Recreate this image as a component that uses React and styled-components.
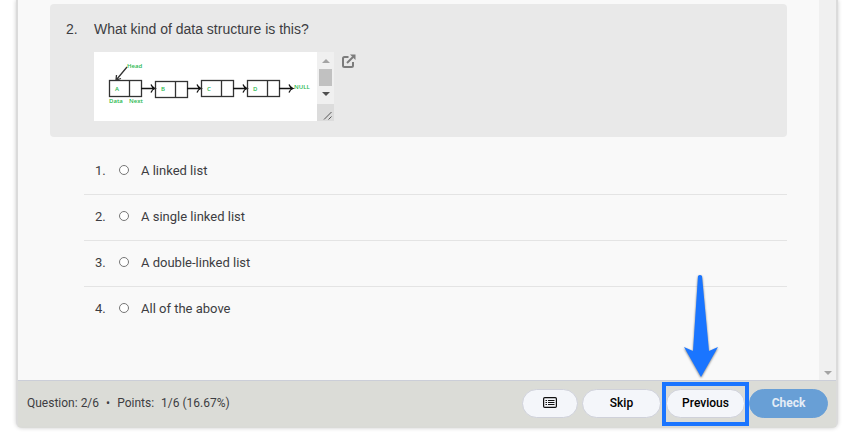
import React, { useState } from "react";
import styled, { createGlobalStyle } from "styled-components";

const GlobalStyle = createGlobalStyle`
* {
    box-sizing: border-box;
}
body {
    margin: 0;
    background: #ffffff;
    color: #3d3d42;
    font-family: Roboto, "Liberation Sans", sans-serif;
    font-size: 13px;
}
`
const Page = styled.div`
padding: 0 26px 4px 16px;
`
const Panel = styled.main`
display: flex;
flex-direction: column;
border: 2px solid #dbdbdb;
border-top: 0;
border-bottom-color: #dadbd7;
border-radius: 0 0 6px 6px;
background: #f9f9f9;
box-shadow: 0 0 4px rgba(0, 0, 0, 0.2);
`
const Body = styled.div`
display: flex;
`
const Content = styled.div`
flex: 1;
padding: 4px 32px 48px;
`
const Gutter = styled.div`
display: flex;
align-items: flex-end;
justify-content: center;
width: 17px;
padding-bottom: 5px;
background: #f0f0f0;
`
const QuestionCard = styled.section`
display: flex;
padding: 16px;
border-radius: 4px;
background: #e9e9e9;
font-family: "Liberation Sans", Arial, sans-serif;
font-size: 14px;
line-height: 18px;
`
const QuestionNumber = styled.div`
width: 28px;
`
const QuestionTitle = styled.h1`
margin: 0 0 14px;
font-size: inherit;
font-weight: 400;
`
const Media = styled.div`
display: flex;
gap: 8px;
`
const ImageFrame = styled.div`
display: flex;
height: 69px;
background: #ffffff;
`
const ScrollColumn = styled.div`
display: flex;
flex-direction: column;
width: 17px;
background: #f0f0f0;
`
const ScrollTrack = styled.div`
display: flex;
flex: 1;
flex-direction: column;
align-items: center;
padding-top: 7px;
gap: 6px;
`
const Thumb = styled.div`
width: 13px;
height: 17px;
background: #c1c1c1;
`
const Caret = styled.span`
width: 0;
height: 0;
border: 4px solid transparent;
border-top-width: ${props => props.$up ? "0" : "4px"};
border-bottom-width: ${props => props.$up ? "4px" : "0"};
border-top-color: ${props => props.$up ? "transparent" : props.$color};
border-bottom-color: ${props => props.$up ? props.$color : "transparent"};
`
const Grip = styled.div`
display: flex;
align-items: flex-end;
justify-content: flex-end;
height: 17px;
background: #dcdcdc;
`
const OpenButton = styled.button`
align-self: flex-start;
padding: 2px 0 0;
border: 0;
background: none;
line-height: 0;
cursor: pointer;
`
const AnswerList = styled.ol`
margin: 12px 0 0 34px;
padding: 0;
list-style: none;
`
const AnswerRow = styled.li`
border-bottom: 1px solid #e4e4e4;
&:last-child {
    border-bottom: 0;
}
`
const AnswerLabel = styled.label`
display: flex;
align-items: center;
height: 45px;
padding: 0 0 2px 11px;
cursor: pointer;
`
const AnswerNumber = styled.span`
width: 24px;
`
const Radio = styled.input`
appearance: none;
width: 10px;
height: 10px;
margin: 0 12px 2px 0;
border: 1px solid #767676;
border-radius: 50%;
background: #ffffff;
&:checked {
    border: 3px solid #1a75ff;
}
`
const Footer = styled.footer`
display: flex;
align-items: center;
justify-content: space-between;
height: 46px;
padding: 0 8px;
border-top: 1px solid #cbced8;
background: #dbdcd7;
`
const Score = styled.div`
display: flex;
gap: 7px;
padding: 0 0 2px 1px;
font-size: 12px;
`
const Actions = styled.div`
display: flex;
gap: 4px;
`
const ActionButton = styled.button`
display: flex;
align-items: center;
justify-content: center;
width: ${props => props.$small ? "56px" : "79px"};
height: 29px;
padding: 0 0 2px;
border: 1px solid ${props => props.$primary ? "#689fd6" : "#cfd1da"};
border-radius: 15px;
background: ${props => props.$primary ? "#689fd6" : "#f4f6fa"};
color: ${props => props.$primary ? "#e4edf6" : "#000000"};
font-family: inherit;
font-size: 12px;
font-weight: ${props => props.$primary ? "700" : "500"};
cursor: pointer;
`
const Highlighted = styled.div`
position: relative;
margin-left: 1px;
`
const HighlightBox = styled.div`
position: absolute;
top: -7px;
left: -4px;
right: -4px;
bottom: -8px;
border: 4px solid #1a75ff;
pointer-events: none;
`
const ArrowDown = styled.svg`
position: absolute;
left: 18px;
bottom: 41px;
filter: drop-shadow(0 1px 1px rgba(0, 0, 0, 0.5));
pointer-events: none;
`

const answers = [
    "A linked list",
    "A single linked list",
    "A double-linked list",
    "All of the above",
]

const nodes = [
    { name: "A", x: 15, y: 28 },
    { name: "B", x: 61, y: 29 },
    { name: "C", x: 107, y: 28 },
    { name: "D", x: 153, y: 28 },
]

function ListDiagram(){
    return(
        <svg width="223" height="69" viewBox="0 0 223 69" role="img" aria-label="Nodes A, B, C and D linked to NULL">
            <g fill="none" stroke="#333333" strokeWidth="1.3">
                {nodes.map(node => (
                    <g key={node.name}>
                        <rect x={node.x + 0.5} y={node.y + 0.5} width="32" height="16" />
                        <path d={`M${node.x + 20.5} ${node.y}v17`} />
                        <path stroke="#111111" d={`M${node.x + 32} 36.5h13M${node.x + 42} 32.5q1 3 4 4q-3 1-4 4`} />
                    </g>
                ))}
                <path d="M33 15L23 27M22.500 23l-.5 5 5-1.500" />
            </g>
            <g fill="#1fb84e" fontFamily="Open Sans, sans-serif" fontSize="6" fontWeight="600">
                {nodes.map(node => (
                    <text key={node.name} x={node.x + 6} y="39">{node.name}</text>
                ))}
                <text x="33" y="16">Head</text>
                <text x="15" y="51">Data</text>
                <text x="35" y="51">Next</text>
                <text x="200" y="37">NULL</text>
            </g>
        </svg>
    )
}

function OpenIcon(){
    return(
        <svg width="14" height="15" viewBox="0 0 14 15" fill="none" stroke="#7c7c7c" strokeWidth="2">
            <path d="M6.500 3H2.500Q1 3 1 4.500V11.500Q1 13 2.500 13H9.500Q11 13 11 11.500V8" />
            <path d="M5 9L11 3" />
            <path d="M8 .5H13.500V6Z" fill="#7c7c7c" stroke="none" />
        </svg>
    )
}

function OutlineIcon(){
    return(
        <svg width="14" height="11" viewBox="0 0 14 11" fill="none" stroke="#111111">
            <rect x="0.600" y="0.600" width="12.800" height="9.800" rx="1.200" strokeWidth="1.200" />
            <path d="M2.500 3.500h1.500M2.500 5.500h1.500M2.500 7.500h1.500M5 3.500h6.500M5 5.500h6.500M5 7.500h6.500" />
        </svg>
    )
}

function App(){
    const [selected, setSelected] = useState(null)

    return(
        <>
        <GlobalStyle />
        <Page>
            <Panel>
                <Body>
                    <Content>
                        <QuestionCard>
                            <QuestionNumber>2.</QuestionNumber>
                            <div>
                                <QuestionTitle>What kind of data structure is this?</QuestionTitle>
                                <Media>
                                    <ImageFrame>
                                        <ListDiagram />
                                        <ScrollColumn>
                                            <ScrollTrack>
                                                <Caret $up $color="#a3a3a3" />
                                                <Thumb />
                                                <Caret $color="#505050" />
                                            </ScrollTrack>
                                            <Grip>
                                                <svg width="11" height="11" viewBox="0 0 11 11" stroke="#555555">
                                                    <path d="M1 9.500L8.500 2M5.500 9.500L8.500 6.500" />
                                                </svg>
                                            </Grip>
                                        </ScrollColumn>
                                    </ImageFrame>
                                    <OpenButton type="button" aria-label="Open image">
                                        <OpenIcon />
                                    </OpenButton>
                                </Media>
                            </div>
                        </QuestionCard>
                        <AnswerList>
                            {answers.map((answer, index) => (
                                <AnswerRow key={answer}>
                                    <AnswerLabel>
                                        <AnswerNumber>{index + 1}.</AnswerNumber>
                                        <Radio
                                            type="radio"
                                            name="answer"
                                            checked={selected === index}
                                            onChange={() => setSelected(index)}
                                        />
                                        {answer}
                                    </AnswerLabel>
                                </AnswerRow>
                            ))}
                        </AnswerList>
                    </Content>
                    <Gutter>
                        <Caret $color="#a3a3a3" />
                    </Gutter>
                </Body>
                <Footer>
                    <Score>
                        <span>Question: 2/6</span>
                        <span>•</span>
                        <span>Points:</span>
                        <span>1/6 (16.67%)</span>
                    </Score>
                    <Actions>
                        <ActionButton type="button" $small aria-label="Question list">
                            <OutlineIcon />
                        </ActionButton>
                        <ActionButton type="button">Skip</ActionButton>
                        <Highlighted>
                            <ActionButton type="button">Previous</ActionButton>
                            <HighlightBox />
                            <ArrowDown width="34" height="103" viewBox="0 0 34 103" fill="#1a75ff">
                                <path d="M14 2Q16 0 18 2L25 77L34 73L17 103L0 73L9 77Z" />
                            </ArrowDown>
                        </Highlighted>
                        <ActionButton type="button" $primary>Check</ActionButton>
                    </Actions>
                </Footer>
            </Panel>
        </Page>
        </>
    )
}
export default App;
